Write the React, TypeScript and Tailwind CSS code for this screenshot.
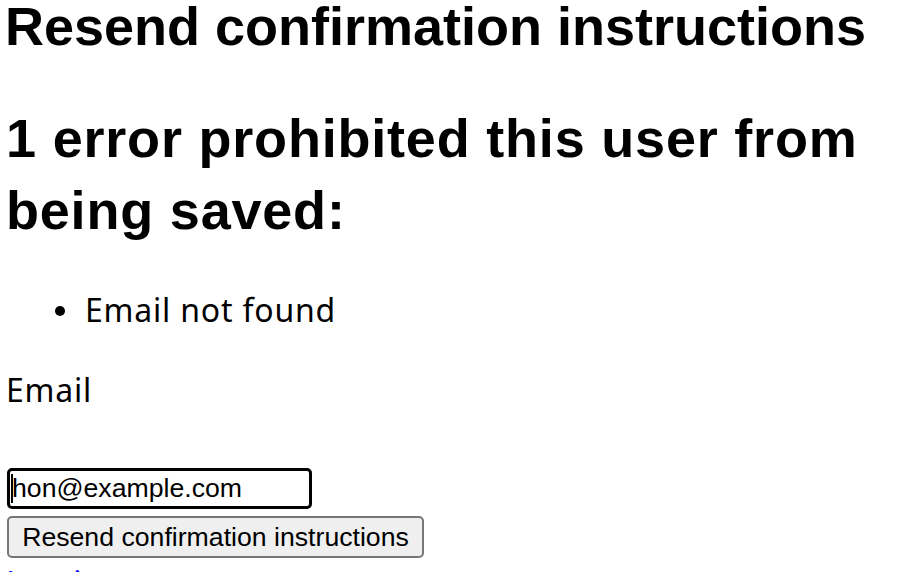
export default function App() {
  return (
    <div className="w-[910px] h-[572px] overflow-hidden bg-white text-black font-['Noto_Sans',sans-serif]">
      <h2 className="ml-[5px] font-['Liberation_Sans',Arial,sans-serif] font-bold text-[54px] leading-[52px] whitespace-nowrap">
        Resend confirmation instructions
      </h2>

      <div className="mt-[50px]">
        <h2 className="ml-[6px] font-['Liberation_Sans',Arial,sans-serif] font-bold text-[54px] leading-[72px] tracking-[0.8px]">
          1 error prohibited this user from
          <br />
          being saved:
        </h2>
        <ul className="mt-[40px]">
          <li className="flex items-center text-[32px] leading-[48px] tracking-[0.8px]">
            <span className="ml-[55px] mt-[2px] w-[10px] h-[10px] rounded-full bg-black" />
            <span className="ml-[20px]">Email not found</span>
          </li>
        </ul>
      </div>

      <div className="mt-[32px] ml-[6px] text-[32px] leading-[48px] tracking-[0.8px]">Email</div>

      <div className="mt-[54px] ml-[7px] flex flex-col gap-[7px] font-['Liberation_Sans',Arial,sans-serif] text-[26.67px]">
        <div className="w-[305px] h-[41px] border-[3px] border-black rounded-[5px] flex items-center pl-[1px]">
          <span className="w-[2px] h-[29px] bg-black" />
          <span className="-ml-[1px] leading-none">hon@example.com</span>
        </div>
        <button className="w-[417px] h-[42px] border-2 border-[#767676] rounded-[5px] bg-[#efefef] leading-none">
          Resend confirmation instructions
        </button>
      </div>

      <a href="#" className="block mt-[7px] ml-[6px] text-[32px] leading-[36px] text-[#0000ee] underline tracking-[0.8px]">
        Log in
      </a>
    </div>
  );
}
